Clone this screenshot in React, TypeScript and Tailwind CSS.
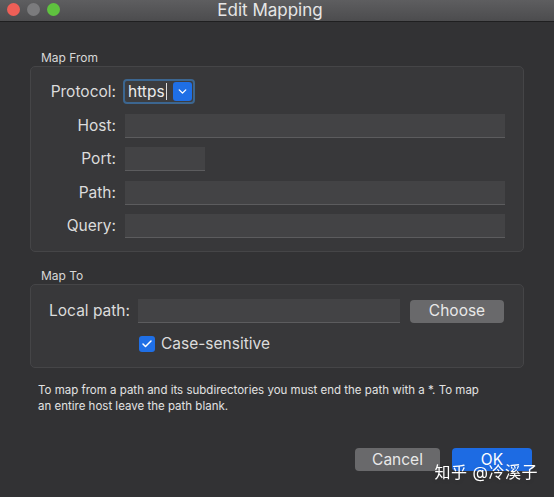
import { Check, ChevronDown } from 'lucide-react';

const fieldRows = [
  { label: 'Host:', width: 'w-full' },
  { label: 'Port:', width: 'w-[80px]' },
  { label: 'Path:', width: 'w-full' },
  { label: 'Query:', width: 'w-full' },
];

function Field({ className = '' }: { className?: string }) {
  return <div className={`h-6 bg-[#434345] border-b border-[#5c5c5e] ${className}`} />;
}

export default function App() {
  return (
    <div
      className="w-[554px] h-[497px] bg-[#323234] text-[#dcdcdc] overflow-hidden"
      style={{ fontFamily: 'Inter, "Noto Sans CJK SC", sans-serif' }}
    >
      {/* Title bar */}
      <div className="relative h-[22px] flex items-center justify-center pr-[14px] bg-gradient-to-b from-[#5e5e60] to-[#4c4c4e] border-b border-[#1f1f20]">
        <div className="absolute left-[7px] top-[3px] flex gap-[7px]">
          <span className="w-[13px] h-[13px] rounded-full bg-[#ee5f57]" />
          <span className="w-[13px] h-[13px] rounded-full bg-[#7b7b7d]" />
          <span className="w-[13px] h-[13px] rounded-full bg-[#5fc23f]" />
        </div>
        <span className="text-[17px] text-[#e6e6e6] leading-none">Edit Mapping</span>
      </div>

      <div className="px-[30px] pt-[28px]">
        {/* Map From */}
        <div className="pl-[11px] text-[12px] leading-[15px] text-[#d8d8d8]">Map From</div>
        <div className="mt-[1px] rounded-[5px] border border-[#454547] bg-[#38383a] pt-[12px] pb-[13px] pr-[18px]">
          <div className="grid grid-cols-[85px_1fr] gap-x-[9px] gap-y-[9.5px] items-center text-[15.5px]">
            <span className="text-right">Protocol:</span>
            <div className="-ml-[2px] flex items-center h-[25px] w-[72px] rounded-[4px] border-[2px] border-[#3c6690] bg-[#3d3d3f]">
              <span className="pl-[3px] text-[15.5px] text-[#ececec] leading-none">https</span>
              <span className="w-[1px] h-[17px] bg-[#dddddd] ml-[1px]" />
              <span className="ml-auto mr-[1px] w-[19px] h-[19px] rounded-[3px] bg-[#1f6fe6] flex items-center justify-center">
                <ChevronDown className="w-[13px] h-[13px] text-white" strokeWidth={2.5} />
              </span>
            </div>
            {fieldRows.map((r) => (
              <>
                <span key={r.label + 'l'} className="text-right">{r.label}</span>
                <Field key={r.label + 'f'} className={r.width} />
              </>
            ))}
          </div>
        </div>

        {/* Map To */}
        <div className="mt-[16px] pl-[11px] text-[12px] leading-[15px] text-[#d8d8d8]">Map To</div>
        <div className="mt-[1px] rounded-[5px] border border-[#454547] bg-[#38383a] pt-[14px] pb-[12px] pr-[19px]">
          <div className="flex items-center text-[15.5px]">
            <span className="w-[99px] text-right">Local path:</span>
            <Field className="ml-[8px] flex-1" />
            <button className="ml-[10px] w-[94px] h-[23px] rounded-[4px] bg-[#69696b] text-[#e8e8e8] text-[15.5px] leading-none">
              Choose
            </button>
          </div>
          <div className="mt-[9px] ml-[108px] flex items-center gap-[6px] text-[15.5px]">
            <span className="w-[16px] h-[16px] rounded-[3px] bg-[#1f6fe6] flex items-center justify-center">
              <Check className="w-[12px] h-[12px] text-white" strokeWidth={3} />
            </span>
            <span>Case-sensitive</span>
          </div>
        </div>

        <p className="mt-[14px] pl-[8px] text-[11.5px] leading-[16px] text-[#e2e2e2]">
          To map from a path and its subdirectories you must end the path with a *. To map
          <br />
          an entire host leave the path blank.
        </p>

        <div className="relative mt-[34px] flex justify-end gap-[12px] mr-[-8px]">
          <button className="w-[85px] h-[23px] rounded-[4px] bg-[#69696b] text-[#e8e8e8] text-[15.5px] leading-none">
            Cancel
          </button>
          <button className="w-[80px] h-[23px] rounded-[4px] bg-[#1d6be3] text-white text-[15.5px] leading-none">
            OK
          </button>
          <span className="absolute right-[-6px] top-[12px] text-[16px] text-white tracking-[0.5px] drop-shadow">
            知乎 @冷溪子
          </span>
        </div>
      </div>
    </div>
  );
}
